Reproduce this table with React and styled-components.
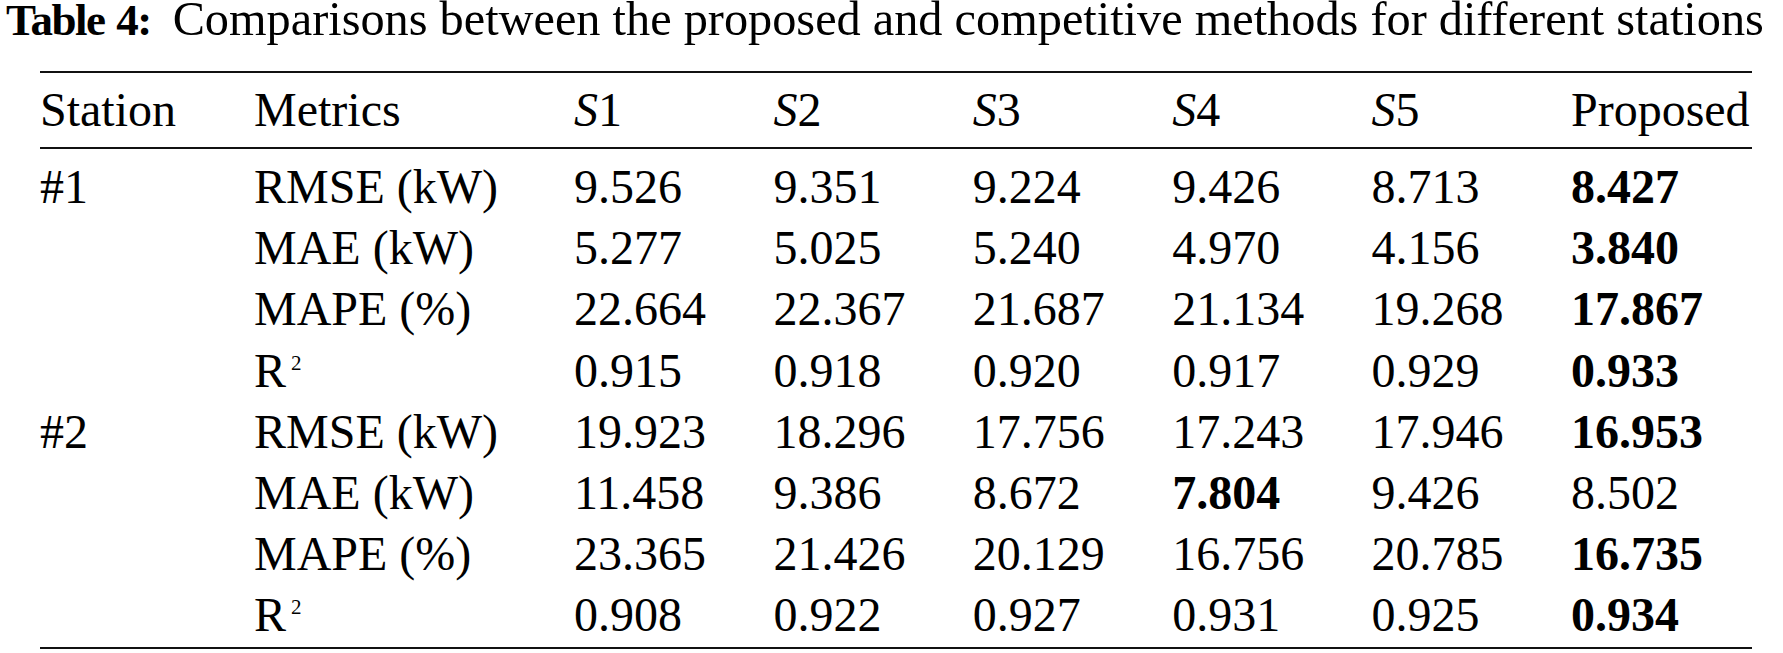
import styled, { createGlobalStyle } from "styled-components";

const GlobalStyle = createGlobalStyle`
    html, body {
        margin: 0;
        padding: 0;
        background: #ffffff;
    }
    body {
        font-family: "Liberation Serif", "Times New Roman", serif;
        color: #000000;
    }
`;

const Page = styled.main`
    width: 1783px;
    height: 653px;
    overflow: hidden;
`;

const Caption = styled.h1`
    margin: 0 0 32px;
    padding-left: 6px;
    font-size: 48.3px;
    font-weight: 400;
    line-height: 38px;
    white-space: nowrap;
`;

const CaptionLabel = styled.b`
    font-size: 45px;
    font-weight: 700;
    letter-spacing: -1.5px;
    word-spacing: 2px;
    margin-right: 22px;
`;

const Table = styled.table`
    margin-left: 40px;
    width: 1712px;
    border-collapse: collapse;
    table-layout: fixed;
    font-size: 48px;
    line-height: 61.2px;
    border-top: 2px solid #111;
    border-bottom: 2px solid #111;
`;

const HeadRow = styled.tr`
    border-bottom: 2px solid #111;
`;

const HeadCell = styled.th`
    padding: 6px 0 7px;
    font-weight: 400;
    text-align: left;
    line-height: 61px;
    white-space: nowrap;
`;

const Cell = styled.td`
    padding: ${(p) => (p.$first ? "7px 0 0" : p.$last ? "0 0 1px" : "0")};
    font-weight: ${(p) => (p.$bold ? 700 : 400)};
    text-align: left;
    white-space: nowrap;
`;

const Method = styled.i`
    font-style: italic;
`;

const Sup = styled.span`
    display: inline-block;
    margin-left: 5px;
    font-size: 21px;
    line-height: 0;
    vertical-align: 17px;
`;

const columns = [214, 320, 199.4, 199.4, 199.4, 199.4, 199.4, null];

const rows = [
    { station: "#1", metric: "RMSE (kW)", values: ["9.526", "9.351", "9.224", "9.426", "8.713", "8.427"], best: 5 },
    { metric: "MAE (kW)", values: ["5.277", "5.025", "5.240", "4.970", "4.156", "3.840"], best: 5 },
    { metric: "MAPE (%)", values: ["22.664", "22.367", "21.687", "21.134", "19.268", "17.867"], best: 5 },
    { metric: "R2", values: ["0.915", "0.918", "0.920", "0.917", "0.929", "0.933"], best: 5 },
    { station: "#2", metric: "RMSE (kW)", values: ["19.923", "18.296", "17.756", "17.243", "17.946", "16.953"], best: 5 },
    { metric: "MAE (kW)", values: ["11.458", "9.386", "8.672", "7.804", "9.426", "8.502"], best: 3 },
    { metric: "MAPE (%)", values: ["23.365", "21.426", "20.129", "16.756", "20.785", "16.735"], best: 5 },
    { metric: "R2", values: ["0.908", "0.922", "0.927", "0.931", "0.925", "0.934"], best: 5 },
];

function MetricName({ name }) {
    // R² gets a small raised 2
    if (name === "R2") {
        return (
            <>
                R<Sup>2</Sup>
            </>
        );
    }
    return name;
}

export default function App() {
    return (
        <Page>
            <GlobalStyle />
            <Caption>
                <CaptionLabel>Table 4:</CaptionLabel>
                Comparisons between the proposed and competitive methods for different stations
            </Caption>

            <Table>
                <colgroup>
                    {columns.map((w, i) => (
                        <col key={i} style={w ? { width: `${w}px` } : undefined} />
                    ))}
                </colgroup>
                <thead>
                    <HeadRow>
                        <HeadCell>Station</HeadCell>
                        <HeadCell>Metrics</HeadCell>
                        {[1, 2, 3, 4, 5].map((n) => (
                            <HeadCell key={n}>
                                <Method>S</Method>
                                {n}
                            </HeadCell>
                        ))}
                        <HeadCell>Proposed</HeadCell>
                    </HeadRow>
                </thead>
                <tbody>
                    {rows.map((row, r) => {
                        const first = r === 0;
                        const last = r === rows.length - 1;
                        return (
                            <tr key={r}>
                                <Cell $first={first} $last={last}>{row.station || ""}</Cell>
                                <Cell $first={first} $last={last}>
                                    <MetricName name={row.metric} />
                                </Cell>
                                {row.values.map((v, i) => (
                                    <Cell key={i} $first={first} $last={last} $bold={i === row.best}>
                                        {v}
                                    </Cell>
                                ))}
                            </tr>
                        );
                    })}
                </tbody>
            </Table>
        </Page>
    );
}
